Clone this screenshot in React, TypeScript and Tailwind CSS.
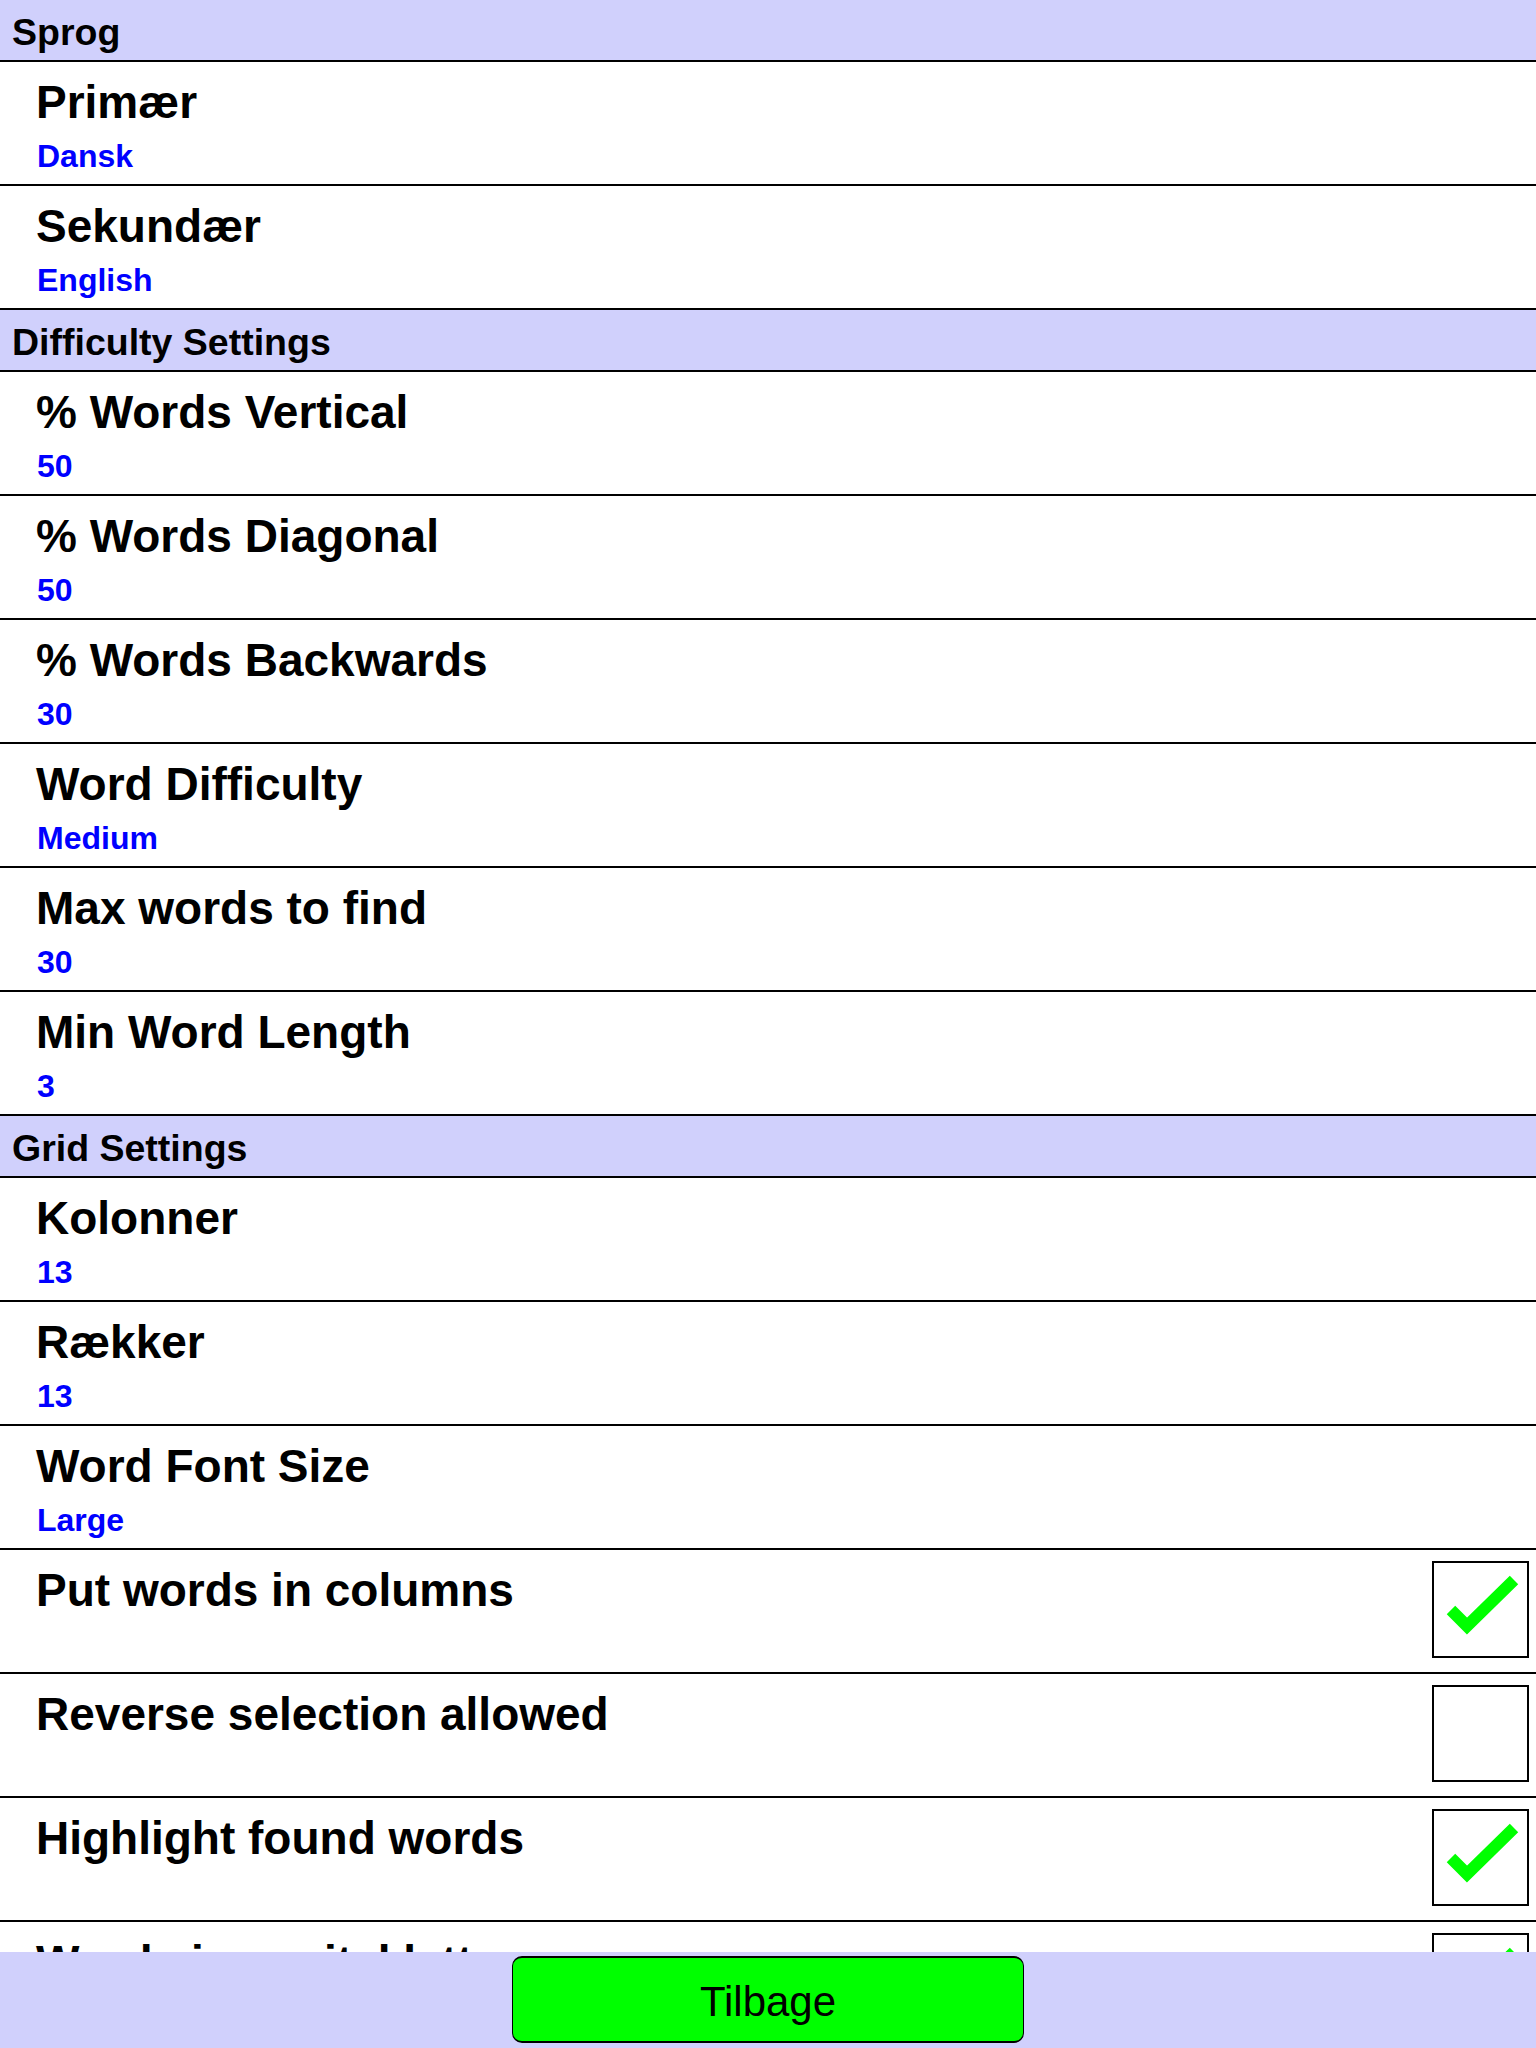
import React from "react"

type Item =
  | { kind: "header"; label: string }
  | { kind: "value"; label: string; value: string }
  | { kind: "check"; label: string; checked: boolean }

const items: Item[] = [
  { kind: "header", label: "Sprog" },
  { kind: "value", label: "Primær", value: "Dansk" },
  { kind: "value", label: "Sekundær", value: "English" },
  { kind: "header", label: "Difficulty Settings" },
  { kind: "value", label: "% Words Vertical", value: "50" },
  { kind: "value", label: "% Words Diagonal", value: "50" },
  { kind: "value", label: "% Words Backwards", value: "30" },
  { kind: "value", label: "Word Difficulty", value: "Medium" },
  { kind: "value", label: "Max words to find", value: "30" },
  { kind: "value", label: "Min Word Length", value: "3" },
  { kind: "header", label: "Grid Settings" },
  { kind: "value", label: "Kolonner", value: "13" },
  { kind: "value", label: "Rækker", value: "13" },
  { kind: "value", label: "Word Font Size", value: "Large" },
  { kind: "check", label: "Put words in columns", checked: true },
  { kind: "check", label: "Reverse selection allowed", checked: false },
  { kind: "check", label: "Highlight found words", checked: true },
  { kind: "check", label: "Words in capital letters", checked: true },
]

function CheckBox({ checked }: { checked: boolean }) {
  return (
    <div className="mt-[11px] mr-[7px] w-[97px] h-[97px] shrink-0 border-2 border-black bg-white">
      {checked ? (
        <svg width="93" height="93" viewBox="0 0 93 93">
          <path
            d="M17 47 L33 63 L80 17"
            fill="none"
            stroke="#00ff00"
            strokeWidth="12"
            strokeLinejoin="miter"
            strokeLinecap="butt"
          />
        </svg>
      ) : null}
    </div>
  )
}

function Row({ item }: { item: Item }) {
  if (item.kind === "header") {
    return (
      <div className="h-[62px] shrink-0 bg-[#d0d0fc] border-b-2 border-black pl-[12px] pt-[4px]">
        <div className="text-[37.5px] leading-[56px] font-bold text-black">{item.label}</div>
      </div>
    )
  }

  return (
    <div className="h-[124px] shrink-0 bg-white border-b-2 border-black flex justify-between">
      <div className="pl-[36px] pt-[17px]">
        <div className="text-[46px] leading-[46px] font-bold text-black whitespace-nowrap">
          {item.label}
        </div>
        {item.kind === "value" ? (
          <div className="mt-[15px] ml-px text-[32px] leading-[32px] font-bold text-[#0000ff]">
            {item.value}
          </div>
        ) : null}
      </div>
      {item.kind === "check" ? <CheckBox checked={item.checked} /> : null}
    </div>
  )
}

export default function App() {
  return (
    <div
      className="w-[1536px] h-[2048px] flex flex-col overflow-hidden bg-white"
      style={{ fontFamily: '"Liberation Sans", Arial, Helvetica, sans-serif' }}
    >
      {/* settings list, cut off by the bottom bar */}
      <div className="flex-1 flex flex-col overflow-hidden">
        {items.map((item, i) => (
          <Row key={i} item={item} />
        ))}
      </div>

      {/* bottom bar */}
      <div className="h-[96px] shrink-0 bg-[#d0d0fc] flex justify-center pt-[4px]">
        <button className="w-[512px] h-[87px] pt-[3px] bg-[#00ff00] border-x border-y-2 border-black rounded-[10px] text-[42px] text-black flex items-center justify-center">
          Tilbage
        </button>
      </div>
    </div>
  )
}
